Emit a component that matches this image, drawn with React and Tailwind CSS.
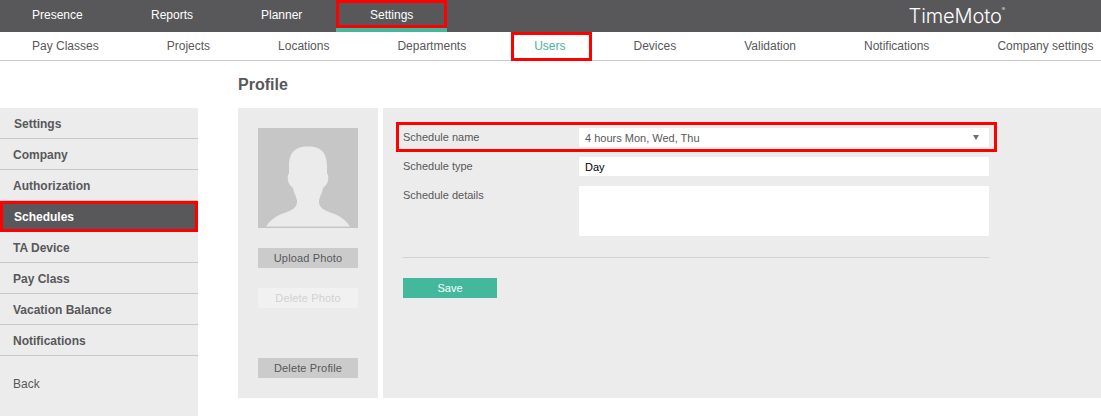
const topTabs = [
  { label: "Presence", width: "w-[117px]", pad: "pl-[32px]" },
  { label: "Reports", width: "w-[110px]", pad: "pl-[34px]" },
  { label: "Planner", width: "w-[109px]", pad: "pl-[34px]" },
];

const subTabs = ["Pay Classes", "Projects", "Locations", "Departments"];
const subTabsAfter = ["Devices", "Validation", "Notifications", "Company settings"];

const sideItems = ["TA Device", "Pay Class", "Vacation Balance", "Notifications"];

const Silhouette = () => (
  <svg viewBox="0 0 100 100" className="w-[100px] h-[100px] bg-[#c6c6c6] block">
    <path
      fill="#ebebeb"
      d="M50 18.5C36 18.5 31 26 31 38L31 45C29.5 47 29.5 50 30 53C30.5 56 33 58 35 60C36 65 38 68 39 72C39.5 76 38 79 35 81C30 84 25 85 21 87C15 90 11 94 8 98.5L92 98.5C89 94 85 90 79 87C75 85 70 84 65 81C62 79 60.5 76 61 72C62 68 64 65 65 60C67 58 69.5 56 70 53C70.5 50 70.5 47 69 45L69 38C69 26 64 18.5 50 18.5Z"
    />
  </svg>
);

const App = () => {
  return (
    <div className="w-[1101px] h-[416px] overflow-hidden bg-white font-['Liberation_Sans',Arial,sans-serif] text-[12px] text-[#58585a]">
      <header className="h-8 bg-[#58585a] flex items-start relative">
        {topTabs.map((tab) => (
          <div key={tab.label} className={`${tab.width} ${tab.pad} h-8 leading-[30px] text-white`}>
            {tab.label}
          </div>
        ))}
        <div className="relative w-[111px] h-8 pl-[34px] leading-[30px] text-white border-b-4 border-[#44b89c]">
          Settings
          <span className="absolute left-0 right-0 top-0 h-[28px] border-[3px] border-[#ff0000]"></span>
        </div>
        <div className="ml-auto mr-[96px] mt-[3px] flex items-start text-white font-['Inter',sans-serif] font-light text-[20px] leading-[26px] tracking-[-0.1px]">
          TimeMoto
          <span className="text-[5px] leading-[12px]">®</span>
        </div>
      </header>

      <nav className="h-[29px] border-b border-[#c8c8c8] flex gap-[68px] pl-8 leading-[28px] whitespace-nowrap">
        {subTabs.map((tab) => (
          <span key={tab}>{tab}</span>
        ))}
        <span className="relative text-[#44b89c]">
          Users
          <span className="absolute -left-[23px] -right-[27px] top-0 h-[29px] border-[3px] border-[#ff0000]"></span>
        </span>
        {subTabsAfter.map((tab) => (
          <span key={tab}>{tab}</span>
        ))}
      </nav>

      <h1 className="pl-[238px] pt-[14px] h-[47px] text-[16px] leading-[20px] font-bold">Profile</h1>

      <div className="flex items-start">
        <aside className="w-[198px] h-[308px] bg-[#ececec] font-bold">
          <div className="h-[31px] pl-[14px] leading-[32px] border-b border-[#c8c8c8]">Settings</div>
          <div className="h-[31px] pl-[13px] leading-[32px] border-b border-[#c8c8c8]">Company</div>
          <div className="h-[31px] pl-[13px] leading-[32px] border-b border-[#c8c8c8]">Authorization</div>
          <div className="h-[31px] pl-[11px] leading-[26px] bg-[#58585a] text-white border-[3px] border-[#ff0000]">Schedules</div>
          {sideItems.map((item) => (
            <div key={item} className="h-[31px] pl-[13px] leading-[32px] border-b border-[#c8c8c8]">
              {item}
            </div>
          ))}
          <div className="pl-[13px] pt-[19px] leading-[18px] font-normal">Back</div>
        </aside>

        <section className="ml-10 w-[140px] h-[290px] bg-[#ebebeb] pt-5 flex flex-col items-center text-[11px] tracking-[0.15px]">
          <Silhouette />
          <button className="mt-5 w-[100px] h-5 bg-[#cbcbcb] text-center">Upload Photo</button>
          <button className="mt-5 w-[100px] h-5 bg-[#f1f1f1] text-center text-[#d2d2d2]">Delete Photo</button>
          <button className="mt-[50px] w-[100px] h-5 bg-[#cbcbcb] text-center">Delete Profile</button>
        </section>

        <main className="ml-[5px] flex-1 h-[290px] bg-[#ececec] pl-5 pt-5 text-[11px]">
          <div className="w-[586px]">
            <div className="relative flex h-[19px] items-start">
              <label className="w-[176px] leading-[18px]">Schedule name</label>
              <div className="flex-1 h-[19px] bg-white pl-[6px] pr-[10px] flex items-center justify-between leading-[20px]">
                <span>4 hours Mon, Wed, Thu</span>
                <svg viewBox="0 0 6 5" className="w-[6px] h-[5px]">
                  <path d="M0 0H6L3 5Z" fill="#6d6d6f" />
                </svg>
              </div>
              <span className="absolute -left-[7px] -right-2 -top-[6px] h-[30px] border-[3px] border-[#ff0000]"></span>
            </div>
            <div className="flex mt-[10px] h-[19px] items-start">
              <label className="w-[176px] leading-[18px]">Schedule type</label>
              <div className="flex-1 h-[19px] bg-white pl-[6px] leading-[20px] text-black">Day</div>
            </div>
            <div className="flex mt-[10px] items-start">
              <label className="w-[176px] leading-[18px]">Schedule details</label>
              <div className="flex-1 h-[50px] bg-white"></div>
            </div>
            <hr className="mt-[21px] border-t border-[#d2d2d2]" />
            <button className="mt-5 block w-[94px] h-5 bg-[#44b89c] text-white font-medium text-center">Save</button>
          </div>
        </main>
      </div>
    </div>
  );
};

export default App;
